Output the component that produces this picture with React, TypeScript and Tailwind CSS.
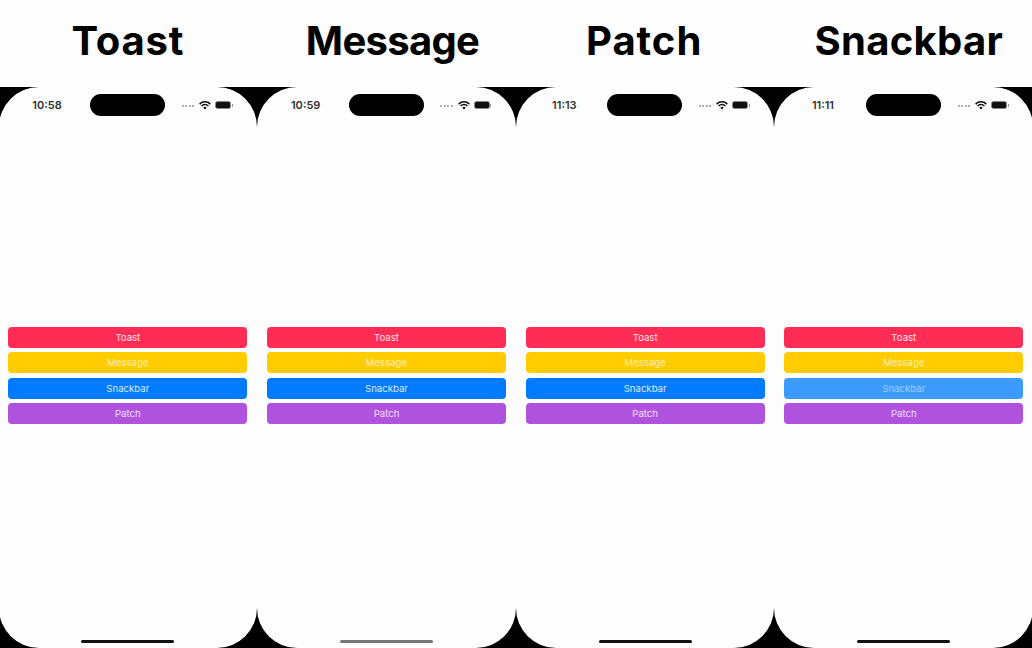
const titles = [
  { label: 'Toast', className: 'pl-[1px] tracking-[0.8px]' },
  { label: 'Message', className: 'pl-[13px] tracking-[-0.7px]' },
  { label: 'Patch', className: 'pr-[1px] tracking-[1px]' },
  { label: 'Snackbar', className: 'pl-[11px] tracking-[0.3px]' },
];

const phones = [
  { time: '10:58', fadedBar: false, grayHome: false },
  { time: '10:59', fadedBar: false, grayHome: true },
  { time: '11:13', fadedBar: false, grayHome: false },
  { time: '11:11', fadedBar: true, grayHome: false },
];

function StatusIcons() {
  return (
    <div className="flex items-center ml-auto">
      <div className="flex gap-[1.5px] mr-[5px] mt-[2px]">
        <span className="w-[2px] h-[1.5px] bg-[#b0b0b0]" />
        <span className="w-[2px] h-[1.5px] bg-[#b0b0b0]" />
        <span className="w-[2px] h-[1.5px] bg-[#b0b0b0]" />
        <span className="w-[2px] h-[1.5px] bg-[#b0b0b0]" />
      </div>
      <svg width="12" height="9" viewBox="0 0 12 9" className="mr-[4px]">
        <path d="M0.6 3.1 A7.6 7.6 0 0 1 11.4 3.1" fill="none" stroke="#111" strokeWidth="1.5" />
        <path d="M2.6 5 A4.8 4.8 0 0 1 9.4 5" fill="none" stroke="#111" strokeWidth="1.5" />
        <path d="M4.3 6.7 L6 8.6 L7.7 6.7 A2.4 2.4 0 0 0 4.3 6.7 Z" fill="#111" />
      </svg>
      <div className="flex items-center">
        <div className="w-[16px] h-[8px] rounded-[2.5px] bg-[#111] border border-[#888]" />
        <span className="w-[1px] h-[3px] ml-[0.5px] bg-[#999]" />
      </div>
    </div>
  );
}

function Phone({ time, fadedBar, grayHome }: { time: string; fadedBar: boolean; grayHome: boolean }) {
  return (
    <div className="w-[258.67px] h-[561px] shrink-0 rounded-[40px] bg-[#fdfdfd] flex flex-col items-center">
      <div className="w-full h-[22px] mt-[7px] pl-[33.5px] pr-[24.5px] flex items-center">
        <span className="w-[30px] text-center text-[11px] font-semibold text-[#333] font-['Inter',sans-serif]">{time}</span>
        <div className="w-[75px] h-[22px] ml-[28px] rounded-full bg-black" />
        <StatusIcons />
      </div>
      <div className="mt-[211px] w-[239px] flex flex-col gap-[4.33px] font-['Inter',sans-serif] text-[9.6px] text-center">
        <div className="h-[21px] leading-[21px] rounded-[4px] bg-[#ff2d55] text-white/85">Toast</div>
        <div className="h-[21px] leading-[21px] rounded-[4px] bg-[#ffcc00] text-white/70">Message</div>
        <div className={fadedBar ? 'h-[21px] leading-[21px] rounded-[4px] bg-[#3d9bff] text-white/50' : 'h-[21px] leading-[21px] rounded-[4px] bg-[#007aff] text-white/85'}>Snackbar</div>
        <div className="h-[21px] leading-[21px] rounded-[4px] bg-[#af52de] text-white/80">Patch</div>
      </div>
      <div className={grayHome ? 'mt-auto mb-[5px] w-[93px] h-[3px] rounded-full bg-[#777]' : 'mt-auto mb-[5px] w-[93px] h-[3px] rounded-full bg-[#111]'} />
    </div>
  );
}

export default function App() {
  return (
    <div className="w-[1032px] h-[648px] overflow-hidden bg-[#fdfdfd]">
      {/* Titles */}
      <div className="h-[87px] flex items-center -ml-[2px] pb-[6px]">
        {titles.map((t) => (
          <div key={t.label} className={`w-[258.67px] shrink-0 text-center text-[40px] leading-none font-bold text-black font-['Inter',sans-serif] ${t.className}`}>
            {t.label}
          </div>
        ))}
      </div>

      {/* Phones */}
      <div className="flex w-[1040px] -ml-[1.5px] bg-black">
        {phones.map((p) => (
          <Phone key={p.time} {...p} />
        ))}
      </div>
    </div>
  );
}
